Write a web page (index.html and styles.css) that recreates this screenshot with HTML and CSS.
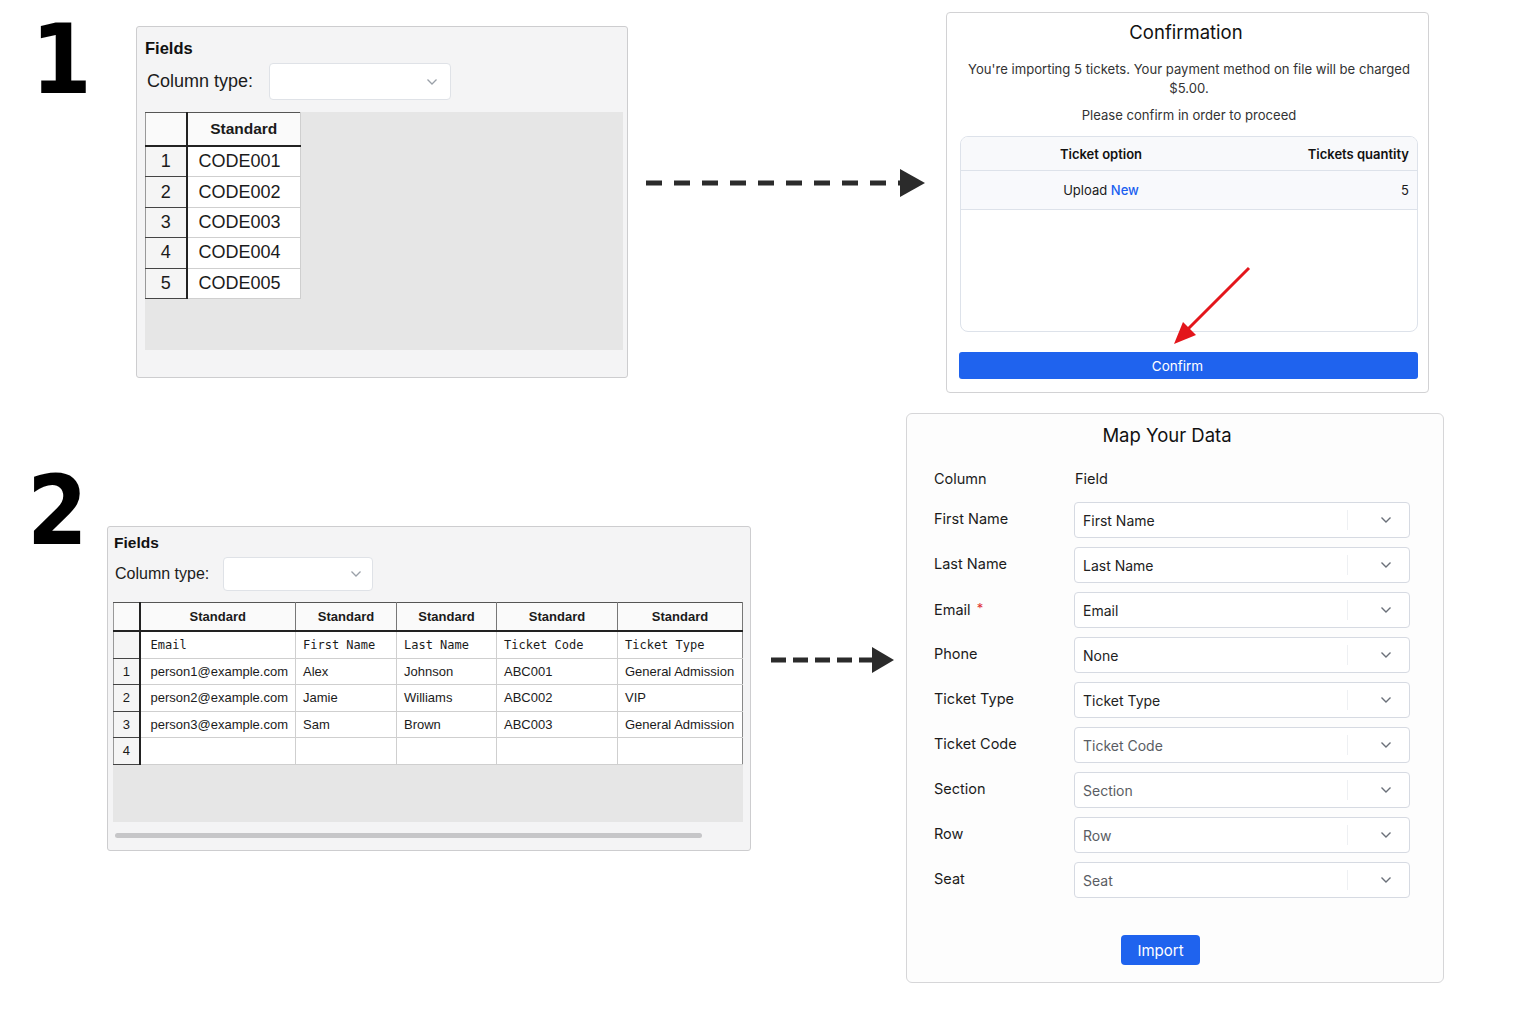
FILE: index.html
```html
<!DOCTYPE html>
<html lang="en">
<head>
  <meta charset="UTF-8">
  <title>Ticket Import Flow</title>
  <link rel="stylesheet" href="styles.css">
</head>
<body>

  <!-- Step 1: single column upload -->
  <div class="step step-one">
    <div class="step-num num-one">1</div>

    <div class="sheet-panel panel-one">
      <div class="panel-title">Fields</div>
      <div class="coltype">
        <span class="coltype-label">Column type:</span>
        <div class="coltype-select">
          <svg width="12" height="8" viewBox="0 0 12 8"><polyline points="1.5,1.5 6,6 10.5,1.5" fill="none" stroke="#9aa0a8" stroke-width="1.3"/></svg>
        </div>
      </div>
      <div class="sheet-area">
        <table class="sheet sheet-lg">
          <colgroup><col class="c-idx"><col class="c-code"></colgroup>
          <thead><tr><th class="corner"></th><th>Standard</th></tr></thead>
          <tbody>
            <tr><th>1</th><td>CODE001</td></tr>
            <tr><th>2</th><td>CODE002</td></tr>
            <tr><th>3</th><td>CODE003</td></tr>
            <tr><th>4</th><td>CODE004</td></tr>
            <tr><th>5</th><td>CODE005</td></tr>
          </tbody>
        </table>
      </div>
    </div>

    <svg class="flow-arrow arrow-one" width="280" height="30" viewBox="0 0 280 30">
      <line x1="0" y1="15" x2="258" y2="15" stroke="#2b2b2b" stroke-width="5" stroke-dasharray="16 12"/>
      <polygon points="254,1 279,15 254,29" fill="#2b2b2b"/>
    </svg>

    <div class="confirm-panel">
      <h2 class="confirm-title">Confirmation</h2>
      <p class="confirm-text">You're importing 5 tickets. Your payment method on file will be charged $5.00.</p>
      <p class="confirm-text confirm-ask">Please confirm in order to proceed</p>
      <div class="ticket-box">
        <div class="ticket-head">
          <span class="t-option">Ticket option</span>
          <span class="t-qty">Tickets quantity</span>
        </div>
        <div class="ticket-row">
          <span class="t-option">Upload <span class="t-new">New</span></span>
          <span class="t-qty">5</span>
        </div>
      </div>
      <button class="btn-confirm">Confirm</button>
      <!-- pointer to the confirm button -->
      <svg class="pointer" width="80" height="80" viewBox="0 0 80 80">
        <line x1="76" y1="2" x2="15" y2="63" stroke="#e3161b" stroke-width="3"/>
        <polygon points="1,78 10,56 23,69" fill="#e3161b"/>
      </svg>
    </div>
  </div>

  <!-- Step 2: full sheet mapping -->
  <div class="step step-two">
    <div class="step-num num-two">2</div>

    <div class="sheet-panel panel-two">
      <div class="panel-title">Fields</div>
      <div class="coltype">
        <span class="coltype-label">Column type:</span>
        <div class="coltype-select">
          <svg width="12" height="8" viewBox="0 0 12 8"><polyline points="1.5,1.5 6,6 10.5,1.5" fill="none" stroke="#9aa0a8" stroke-width="1.3"/></svg>
        </div>
      </div>
      <div class="sheet-area">
        <table class="sheet sheet-sm">
          <colgroup>
            <col class="c-idx2"><col class="c-email"><col class="c-first"><col class="c-last"><col class="c-tcode"><col class="c-ttype">
          </colgroup>
          <thead>
            <tr><th class="corner"></th><th>Standard</th><th>Standard</th><th>Standard</th><th>Standard</th><th>Standard</th></tr>
          </thead>
          <tbody>
            <tr class="name-row"><th></th><td>Email</td><td>First Name</td><td>Last Name</td><td>Ticket Code</td><td>Ticket Type</td></tr>
            <tr><th>1</th><td>person1@example.com</td><td>Alex</td><td>Johnson</td><td>ABC001</td><td>General Admission</td></tr>
            <tr><th>2</th><td>person2@example.com</td><td>Jamie</td><td>Williams</td><td>ABC002</td><td>VIP</td></tr>
            <tr><th>3</th><td>person3@example.com</td><td>Sam</td><td>Brown</td><td>ABC003</td><td>General Admission</td></tr>
            <tr><th>4</th><td></td><td></td><td></td><td></td><td></td></tr>
          </tbody>
        </table>
      </div>
      <div class="scrollbar"></div>
    </div>

    <svg class="flow-arrow arrow-two" width="124" height="28" viewBox="0 0 124 28">
      <line x1="0" y1="14" x2="104" y2="14" stroke="#2b2b2b" stroke-width="5" stroke-dasharray="15 7"/>
      <polygon points="101,1 123,14 101,27" fill="#2b2b2b"/>
    </svg>

    <div class="map-panel">
      <h2 class="map-title">Map Your Data</h2>
      <div class="map-head">
        <span>Column</span>
        <span>Field</span>
      </div>
      <div class="map-grid">
        <span class="map-label">First Name</span>
        <div class="map-select"><span class="sel-text">First Name</span><span class="sel-icon"><svg width="12" height="8" viewBox="0 0 12 8"><polyline points="1.5,1.5 6,6 10.5,1.5" fill="none" stroke="#6b7079" stroke-width="1.4"/></svg></span></div>

        <span class="map-label">Last Name</span>
        <div class="map-select"><span class="sel-text">Last Name</span><span class="sel-icon"><svg width="12" height="8" viewBox="0 0 12 8"><polyline points="1.5,1.5 6,6 10.5,1.5" fill="none" stroke="#6b7079" stroke-width="1.4"/></svg></span></div>

        <span class="map-label">Email <span class="required">*</span></span>
        <div class="map-select"><span class="sel-text">Email</span><span class="sel-icon"><svg width="12" height="8" viewBox="0 0 12 8"><polyline points="1.5,1.5 6,6 10.5,1.5" fill="none" stroke="#6b7079" stroke-width="1.4"/></svg></span></div>

        <span class="map-label">Phone</span>
        <div class="map-select"><span class="sel-text">None</span><span class="sel-icon"><svg width="12" height="8" viewBox="0 0 12 8"><polyline points="1.5,1.5 6,6 10.5,1.5" fill="none" stroke="#6b7079" stroke-width="1.4"/></svg></span></div>

        <span class="map-label">Ticket Type</span>
        <div class="map-select"><span class="sel-text">Ticket Type</span><span class="sel-icon"><svg width="12" height="8" viewBox="0 0 12 8"><polyline points="1.5,1.5 6,6 10.5,1.5" fill="none" stroke="#6b7079" stroke-width="1.4"/></svg></span></div>

        <span class="map-label">Ticket Code</span>
        <div class="map-select placeholder"><span class="sel-text">Ticket Code</span><span class="sel-icon"><svg width="12" height="8" viewBox="0 0 12 8"><polyline points="1.5,1.5 6,6 10.5,1.5" fill="none" stroke="#6b7079" stroke-width="1.4"/></svg></span></div>

        <span class="map-label">Section</span>
        <div class="map-select placeholder"><span class="sel-text">Section</span><span class="sel-icon"><svg width="12" height="8" viewBox="0 0 12 8"><polyline points="1.5,1.5 6,6 10.5,1.5" fill="none" stroke="#6b7079" stroke-width="1.4"/></svg></span></div>

        <span class="map-label">Row</span>
        <div class="map-select placeholder"><span class="sel-text">Row</span><span class="sel-icon"><svg width="12" height="8" viewBox="0 0 12 8"><polyline points="1.5,1.5 6,6 10.5,1.5" fill="none" stroke="#6b7079" stroke-width="1.4"/></svg></span></div>

        <span class="map-label">Seat</span>
        <div class="map-select placeholder"><span class="sel-text">Seat</span><span class="sel-icon"><svg width="12" height="8" viewBox="0 0 12 8"><polyline points="1.5,1.5 6,6 10.5,1.5" fill="none" stroke="#6b7079" stroke-width="1.4"/></svg></span></div>
      </div>
      <button class="btn-import">Import</button>
    </div>
  </div>

</body>
</html>
```

FILE: styles.css
```css
body {
  margin: 0;
  background-color: #ffffff;
  font-family: Inter, "Liberation Sans", sans-serif;
  color: #1b1b1b;
}
.step {
  display: flex;
  align-items: flex-start;
}
.step-one {
  padding-top: 12px;
}
.step-two {
  margin-top: 20px;
}
.step-num {
  font-family: "DejaVu Sans Condensed", "DejaVu Sans", sans-serif;
  font-weight: bold;
  font-size: 97px;
  line-height: 1;
  color: #000;
  box-sizing: border-box;
}
.num-one {
  width: 136px;
  padding-left: 31px;
  margin-top: -1px;
}
.num-two {
  width: 107px;
  padding-left: 27px;
  margin-top: 49px;
}

/* Sheet panels */
.sheet-panel {
  box-sizing: border-box;
  background-color: #f4f4f5;
  border: 1px solid #cdcdcf;
  border-radius: 3px;
  font-family: "Liberation Sans", Arial, sans-serif;
}
.panel-one {
  width: 492px;
  height: 352px;
  margin-top: 14px;
  padding: 11px 4px 0 8px;
}
.panel-two {
  width: 644px;
  height: 325px;
  margin-top: 113px;
  padding: 6px 7px 0 5px;
}
.panel-title {
  font-weight: bold;
  line-height: 20px;
  color: #111;
}
.panel-one .panel-title {
  font-size: 16.5px;
}
.panel-two .panel-title {
  font-size: 15.5px;
  padding-left: 1px;
}
.coltype {
  display: flex;
  align-items: center;
}
.coltype-label {
  margin-left: 2px;
  color: #1b1b1b;
}
.coltype-select {
  box-sizing: border-box;
  background-color: #fff;
  border: 1px solid #dfe2e7;
  border-radius: 4px;
  display: flex;
  align-items: center;
  justify-content: flex-end;
}
.panel-one .coltype {
  margin-top: 5px;
  height: 37px;
}
.panel-one .coltype-label {
  font-size: 18px;
}
.panel-one .coltype-select {
  width: 182px;
  height: 37px;
  margin-left: 16px;
  padding-right: 12px;
}
.panel-two .coltype {
  margin-top: 4px;
  height: 34px;
}
.panel-two .coltype-label {
  font-size: 16px;
}
.panel-two .coltype-select {
  width: 150px;
  height: 34px;
  margin-left: 14px;
  padding-right: 10px;
}
.sheet-area {
  background-color: #e6e6e6;
}
.panel-one .sheet-area {
  margin-top: 12px;
  width: 478px;
  height: 238px;
}
.panel-two .sheet-area {
  margin-top: 11px;
  width: 630px;
  height: 220px;
}
.scrollbar {
  margin: 11px 0 0 2px;
  width: 587px;
  height: 5px;
  border-radius: 3px;
  background-color: #c6c6c8;
}

/* Spreadsheet grid */
.sheet {
  border-collapse: collapse;
  table-layout: fixed;
  background-color: #fff;
}
.sheet th,
.sheet td {
  border: 1px solid #cfcfcf;
  padding: 0;
  white-space: nowrap;
  overflow: hidden;
}
.sheet thead th {
  background-color: #fafafa;
  border-top-color: #555;
  border-bottom: 2px solid #222;
  font-weight: bold;
}
.sheet tbody th {
  background-color: #f5f5f5;
  font-weight: normal;
  border-right: 2px solid #222;
  border-bottom-color: #444;
  border-left-color: #999;
}
.sheet thead .corner {
  border-right: 2px solid #222;
  border-left-color: #999;
}
.sheet-lg .c-idx { width: 41px; }
.sheet-lg .c-code { width: 114px; }
.sheet-lg thead th {
  height: 32px;
  font-size: 15.5px;
}
.sheet-lg tbody th,
.sheet-lg td {
  height: 29.4px;
  font-size: 18px;
}
.sheet-lg td {
  padding-left: 11px;
}
.sheet-sm {
  width: 629px;
}
.sheet-sm .c-idx2 { width: 26px; }
.sheet-sm .c-email { width: 156px; }
.sheet-sm .c-first { width: 101px; }
.sheet-sm .c-last { width: 100px; }
.sheet-sm .c-tcode { width: 121px; }
.sheet-sm .c-ttype { width: 125px; }
.sheet-sm thead th {
  height: 27px;
  font-size: 13px;
  border-left-color: #777;
  border-right-color: #777;
}
.sheet-sm tbody th,
.sheet-sm td {
  height: 25.5px;
  font-size: 13px;
}
.sheet-sm td {
  padding-left: 7px;
}
.sheet-sm td:nth-child(2) {
  padding-left: 10px;
}
.sheet-sm td:last-child {
  border-right-color: #888;
}
.sheet-sm .name-row td {
  font-family: "DejaVu Sans Mono", monospace;
  font-size: 12px;
}

/* Flow arrows */
.flow-arrow {
  flex-shrink: 0;
}
.arrow-one {
  margin: 156px 0 0 18px;
}
.arrow-two {
  margin: 233px 0 0 20px;
}

/* Confirmation dialog */
.confirm-panel {
  position: relative;
  box-sizing: border-box;
  width: 483px;
  height: 381px;
  margin-left: 20px;
  padding: 7px 10px 0 13px;
  background-color: #fff;
  border: 1px solid #d2d2d4;
  border-radius: 4px;
}
.confirm-title {
  margin: 0;
  padding-right: 6px;
  font-size: 18.5px;
  font-weight: normal;
  line-height: 24px;
  text-align: center;
  color: #111;
}
.confirm-text {
  margin: 16px 0 0;
  font-size: 13.1px;
  line-height: 19px;
  text-align: center;
  color: #333;
}
.confirm-ask {
  margin-top: 8px;
}
.ticket-box {
  box-sizing: border-box;
  margin-top: 11px;
  width: 458px;
  height: 196px;
  border: 1px solid #dde2ea;
  border-radius: 8px;
  overflow: hidden;
}
.ticket-head,
.ticket-row {
  display: grid;
  grid-template-columns: 280px 1fr;
  align-items: center;
  font-size: 13px;
  border-bottom: 1px solid #dde2ea;
}
.ticket-head {
  height: 33px;
  background-color: #f8f9fb;
  font-weight: 600;
  color: #111;
}
.ticket-row {
  height: 38px;
  background-color: #f8f9fc;
  color: #1b1b1b;
}
.t-option {
  text-align: center;
}
.t-qty {
  text-align: right;
  padding-right: 8px;
}
.t-new {
  color: #1a5ff0;
  font-weight: 500;
}
.btn-confirm {
  display: block;
  margin: 20px 0 0 -1px;
  padding: 0 22px 0 0;
  width: 459px;
  height: 27px;
  border: none;
  border-radius: 3px;
  background-color: #1f63ee;
  color: #fff;
  font-family: Inter, sans-serif;
  font-size: 13.5px;
}
.pointer {
  position: absolute;
  left: 226px;
  top: 253px;
}

/* Field mapping */
.map-panel {
  box-sizing: border-box;
  width: 538px;
  height: 570px;
  margin-left: 11px;
  padding: 9px 27px 0 27px;
  background-color: #fdfdfd;
  border: 1px solid #d6d6d8;
  border-radius: 6px;
}
.map-title {
  margin: 0;
  padding-right: 16px;
  font-size: 18.5px;
  font-weight: normal;
  line-height: 24px;
  text-align: center;
  color: #111;
}
.map-head {
  display: grid;
  grid-template-columns: 140px 336px;
  margin-top: 22px;
  font-size: 14.5px;
  line-height: 20px;
  color: #1b1b1b;
}
.map-head span:last-child {
  padding-left: 1px;
}
.map-grid {
  display: grid;
  grid-template-columns: 140px 336px;
  row-gap: 9px;
  margin-top: 13px;
  align-items: center;
}
.map-label {
  font-size: 14.5px;
  color: #1b1b1b;
  padding-bottom: 3px;
}
.required {
  color: #e03131;
  font-size: 13px;
  vertical-align: 2px;
  margin-left: 2px;
}
.map-select {
  box-sizing: border-box;
  height: 36px;
  display: flex;
  align-items: center;
  border: 1px solid #d6dae2;
  border-radius: 4px;
  background-color: #fff;
  font-size: 14px;
  color: #222;
}
.map-select.placeholder {
  color: #5a5d63;
}
.sel-text {
  flex: 1;
  padding-left: 8px;
}
.sel-icon {
  box-sizing: border-box;
  display: flex;
  align-items: center;
  justify-content: flex-end;
  width: 62px;
  height: 20px;
  padding-right: 17px;
  border-left: 1px solid #eef0f3;
}
.btn-import {
  display: block;
  margin: 37px 0 0 187px;
  width: 79px;
  height: 30px;
  border: none;
  border-radius: 4px;
  background-color: #1f63ee;
  color: #fff;
  font-family: Inter, sans-serif;
  font-size: 15px;
}
```
